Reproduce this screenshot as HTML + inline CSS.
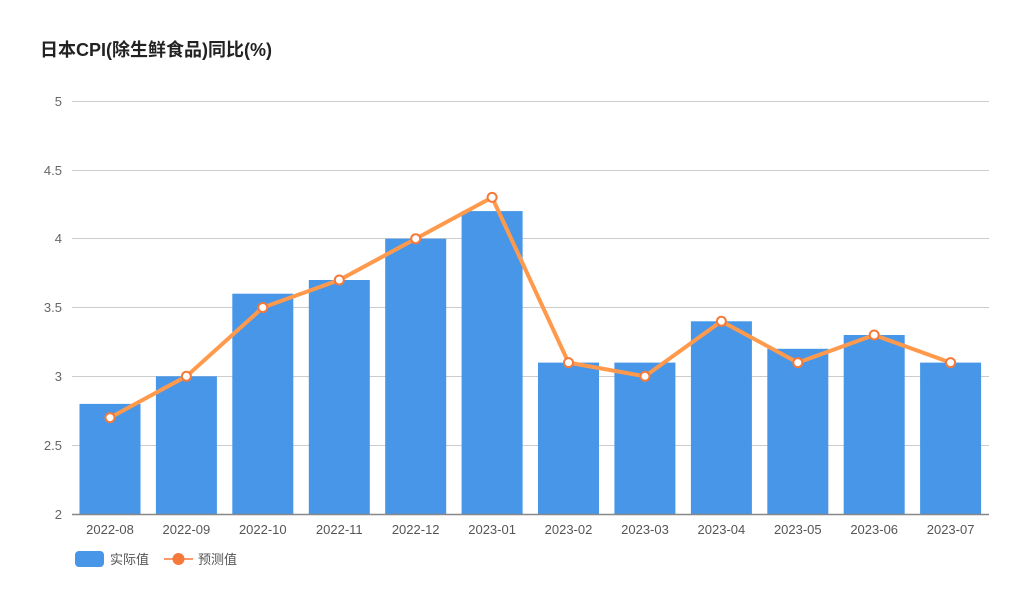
<!DOCTYPE html>
<html><head><meta charset="utf-8"><style>
body{margin:0;background:#fff;width:1024px;height:590px;overflow:hidden}
text{font-family:"Liberation Sans","Noto Sans CJK SC",sans-serif}
</style></head><body>
<svg width="1024" height="590" xmlns="http://www.w3.org/2000/svg">
<text x="40" y="56" font-size="18" font-weight="bold" fill="#222">日本CPI(除生鲜食品)同比(%)</text>
<g stroke="#ccc" stroke-width="1">
<line x1="72" y1="101.5" x2="989" y2="101.5"/>
<line x1="72" y1="170.5" x2="989" y2="170.5"/>
<line x1="72" y1="238.5" x2="989" y2="238.5"/>
<line x1="72" y1="307.5" x2="989" y2="307.5"/>
<line x1="72" y1="376.5" x2="989" y2="376.5"/>
<line x1="72" y1="445.5" x2="989" y2="445.5"/>
</g>
<g font-size="13" fill="#666" text-anchor="end">
<text x="62" y="106">5</text><text x="62" y="175">4.5</text><text x="62" y="243">4</text>
<text x="62" y="312">3.5</text><text x="62" y="381">3</text><text x="62" y="450">2.5</text><text x="62" y="519">2</text>
</g>
<g fill="#4796e8">
<rect x="79.5" y="403.9" width="61" height="110.1"/>
<rect x="155.9" y="376.3" width="61" height="137.7"/>
<rect x="232.3" y="293.7" width="61" height="220.3"/>
<rect x="308.8" y="280" width="61" height="234"/>
<rect x="385.2" y="238.7" width="61" height="275.3"/>
<rect x="461.6" y="211.1" width="61" height="302.9"/>
<rect x="538" y="362.6" width="61" height="151.4"/>
<rect x="614.4" y="362.6" width="61" height="151.4"/>
<rect x="690.9" y="321.3" width="61" height="192.7"/>
<rect x="767.3" y="348.8" width="61" height="165.2"/>
<rect x="843.7" y="335" width="61" height="179"/>
<rect x="920.1" y="362.6" width="61" height="151.4"/>
</g>
<line x1="72" y1="514.5" x2="989" y2="514.5" stroke="#888" stroke-width="1.5"/>
<g font-size="13" fill="#555" text-anchor="middle">
<text x="110" y="534">2022-08</text><text x="186.4" y="534">2022-09</text><text x="262.8" y="534">2022-10</text>
<text x="339.3" y="534">2022-11</text><text x="415.7" y="534">2022-12</text><text x="492.1" y="534">2023-01</text>
<text x="568.5" y="534">2023-02</text><text x="645" y="534">2023-03</text><text x="721.4" y="534">2023-04</text>
<text x="797.8" y="534">2023-05</text><text x="874.2" y="534">2023-06</text><text x="950.6" y="534">2023-07</text>
</g>
<polyline fill="none" stroke="#ff9a4d" stroke-width="4" stroke-linejoin="round" points="110,417.6 186.4,376.3 262.8,307.5 339.3,280 415.7,238.7 492.1,197.4 568.5,362.6 645,376.3 721.4,321.3 797.8,362.6 874.2,335 950.6,362.6"/>
<g fill="#fff" stroke="#f5793a" stroke-width="2">
<circle cx="110" cy="417.6" r="4.5"/><circle cx="186.4" cy="376.3" r="4.5"/><circle cx="262.8" cy="307.5" r="4.5"/>
<circle cx="339.3" cy="280" r="4.5"/><circle cx="415.7" cy="238.7" r="4.5"/><circle cx="492.1" cy="197.4" r="4.5"/>
<circle cx="568.5" cy="362.6" r="4.5"/><circle cx="645" cy="376.3" r="4.5"/><circle cx="721.4" cy="321.3" r="4.5"/>
<circle cx="797.8" cy="362.6" r="4.5"/><circle cx="874.2" cy="335" r="4.5"/><circle cx="950.6" cy="362.6" r="4.5"/>
</g>
<rect x="75" y="551" width="29" height="16" rx="4" fill="#4796e8"/>
<text x="110" y="564" font-size="13" fill="#555">实际值</text>
<line x1="164" y1="559" x2="193" y2="559" stroke="#f5793a" stroke-width="1.5"/>
<circle cx="178.5" cy="559" r="6" fill="#f5793a"/>
<text x="198" y="564" font-size="13" fill="#555">预测值</text>
</svg>
</body></html>
